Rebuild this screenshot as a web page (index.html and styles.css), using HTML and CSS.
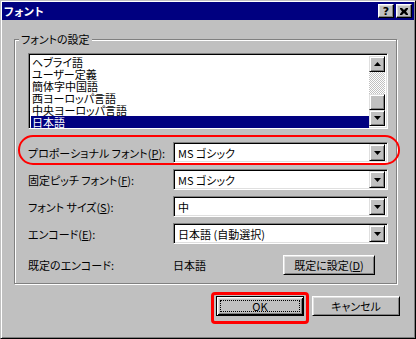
FILE: index.html
```html
<!DOCTYPE html>
<html lang="ja">
<head>
    <meta charset="UTF-8">
    <title>フォント</title>
    <link rel="stylesheet" href="styles.css">
</head>
<body>
    <div class="window">
        <div class="titlebar">
            <span class="title">フォント</span>
            <div class="caption-buttons">
                <span class="caption-btn help">?</span>
                <span class="caption-btn close">
                    <svg width="8" height="7" viewBox="0 0 8 7"><path d="M0 0h2l2 2 2-2h2v1l-2 2.5 2 2.5v1h-2l-2-2-2 2h-2v-1l2-2.5-2-2.5z" fill="#000"/></svg>
                </span>
            </div>
        </div>

        <div class="content">
            <fieldset class="group">
                <legend>フォントの設定</legend>

                <!-- script list -->
                <div class="listbox">
                    <ul class="items">
                        <li>ヘブライ語</li>
                        <li>ユーザー定義</li>
                        <li>簡体字中国語</li>
                        <li>西ヨーロッパ言語</li>
                        <li>中央ヨーロッパ言語</li>
                        <li class="selected">日本語</li>
                    </ul>
                    <div class="vscroll">
                        <span class="sb-btn"><svg width="7" height="4" viewBox="0 0 7 4"><path d="M3.5 0L7 4H0z" fill="#000"/></svg></span>
                        <span class="sb-track"></span>
                        <span class="sb-btn thumb"></span>
                        <span class="sb-btn"><svg width="7" height="4" viewBox="0 0 7 4"><path d="M0 0h7L3.5 4z" fill="#000"/></svg></span>
                    </div>
                </div>

                <div class="field-row marked">
                    <label>プロポーショナル フォント(<u>P</u>):</label>
                    <div class="combo"><span class="combo-text">MS ゴシック</span><span class="combo-btn"><svg width="7" height="4" viewBox="0 0 7 4"><path d="M0 0h7L3.5 4z" fill="#000"/></svg></span></div>
                </div>
                <div class="field-row">
                    <label>固定ピッチ フォント(<u>F</u>):</label>
                    <div class="combo"><span class="combo-text">MS ゴシック</span><span class="combo-btn"><svg width="7" height="4" viewBox="0 0 7 4"><path d="M0 0h7L3.5 4z" fill="#000"/></svg></span></div>
                </div>
                <div class="field-row">
                    <label>フォント サイズ(<u>S</u>):</label>
                    <div class="combo"><span class="combo-text">中</span><span class="combo-btn"><svg width="7" height="4" viewBox="0 0 7 4"><path d="M0 0h7L3.5 4z" fill="#000"/></svg></span></div>
                </div>
                <div class="field-row">
                    <label>エンコード(<u>E</u>):</label>
                    <div class="combo"><span class="combo-text">日本語 (自動選択)</span><span class="combo-btn"><svg width="7" height="4" viewBox="0 0 7 4"><path d="M0 0h7L3.5 4z" fill="#000"/></svg></span></div>
                </div>

                <div class="default-row">
                    <span class="default-label">既定のエンコード:</span>
                    <span class="default-value">日本語</span>
                    <span class="btn set-default">既定に設定(<u>D</u>)</span>
                </div>
            </fieldset>

            <div class="dialog-buttons">
                <span class="btn default marked-btn"><span class="focus">OK</span></span>
                <span class="btn">キャンセル</span>
            </div>
        </div>
    </div>
</body>
</html>
```

FILE: styles.css
```css
body {
    margin: 0;
    padding: 0;
    background: #c0c0c0;
    font-family: "Noto Sans CJK JP", "Noto Sans", sans-serif;
    font-size: 11px;
    line-height: 12px;
    color: #000;
    font-feature-settings: "palt";
}
.window {
    box-sizing: border-box;
    width: 416px;
    height: 339px;
    padding: 1px;
    background: #c0c0c0;
    border: 1px solid;
    border-color: #c0c0c0 #000 #000 #c0c0c0;
    box-shadow: inset 1px 1px #fff, inset -1px -1px #808080;
    display: flex;
    flex-direction: column;
}
.titlebar {
    height: 18px;
    background: #000080;
    display: flex;
    align-items: center;
    justify-content: space-between;
    padding: 0 2px 0 2px;
}
.title {
    color: #fff;
    font-weight: bold;
    font-size: 11px;
    letter-spacing: 0.5px;
}
.caption-buttons {
    display: flex;
    gap: 2px;
}
.caption-btn {
    box-sizing: border-box;
    width: 16px;
    height: 14px;
    background: #c0c0c0;
    border: 1px solid;
    border-color: #fff #000 #000 #fff;
    box-shadow: inset -1px -1px #808080, inset 1px 1px #dfdfdf;
    display: flex;
    align-items: center;
    justify-content: center;
}
.caption-btn.help {
    font-family: "DejaVu Sans", sans-serif;
    font-weight: bold;
    font-size: 11px;
    line-height: 11px;
}
.content {
    flex: 1;
    padding: 13px 0 0 12px;
}
u {
    text-decoration-thickness: 1px;
    text-underline-offset: 1px;
}

/* group box */
.group {
    box-sizing: border-box;
    width: 383px;
    height: 251px;
    margin: 0;
    padding: 8px 13px 0 13px;
    border: 1px solid #808080;
    box-shadow: inset 1px 1px #fff, 1px 1px #fff;
    min-width: 0;
}
.group legend {
    padding: 0 2px;
    margin-left: -9px;
    background: #c0c0c0;
    line-height: 12px;
}

/* listbox */
.listbox {
    box-sizing: border-box;
    width: 360px;
    height: 76px;
    display: flex;
    background: #fff;
    border: 1px solid;
    border-color: #808080 #fff #fff #808080;
    box-shadow: inset 1px 1px #000, inset -1px -1px #dfdfdf;
    padding: 2px;
}
.items {
    flex: 1;
    list-style: none;
    margin: 0;
    padding: 0;
}
.items li {
    height: 12px;
    line-height: 12px;
    padding-left: 1px;
    white-space: nowrap;
}
.items li.selected {
    background: #000080;
    color: #fff;
}
.vscroll {
    width: 16px;
    display: flex;
    flex-direction: column;
}
.sb-btn {
    box-sizing: border-box;
    width: 16px;
    height: 16px;
    background: #c0c0c0;
    border: 1px solid;
    border-color: #dfdfdf #000 #000 #dfdfdf;
    box-shadow: inset 1px 1px #fff, inset -1px -1px #808080;
    display: flex;
    align-items: center;
    justify-content: center;
}
.sb-track {
    flex: 1;
    background: repeating-conic-gradient(#c0c0c0 0 25%, #fff 0 50%) 0 0 / 2px 2px;
}

/* label + combo rows */
.field-row {
    display: flex;
    align-items: center;
    justify-content: space-between;
    width: 360px;
    height: 21px;
    margin-top: 6px;
    position: relative;
}
.field-row.marked {
    margin-top: 13px;
}
.field-row.marked::before {
    content: "";
    position: absolute;
    left: -10px;
    right: -12px;
    top: -7px;
    bottom: -2px;
    border: 2px solid #f00;
    border-radius: 15px;
}
.field-row label {
    white-space: nowrap;
}
.combo {
    box-sizing: border-box;
    width: 215px;
    height: 21px;
    display: flex;
    align-items: center;
    background: #fff;
    border: 1px solid;
    border-color: #808080 #fff #fff #808080;
    box-shadow: inset 1px 1px #000, inset -1px -1px #dfdfdf;
    padding: 2px;
}
.combo-text {
    flex: 1;
    padding-left: 2px;
    white-space: nowrap;
}
.combo-btn {
    box-sizing: border-box;
    width: 16px;
    height: 17px;
    background: #c0c0c0;
    border: 1px solid;
    border-color: #dfdfdf #000 #000 #dfdfdf;
    box-shadow: inset 1px 1px #fff, inset -1px -1px #808080;
    display: flex;
    align-items: center;
    justify-content: center;
}

/* default encoding row */
.default-row {
    display: flex;
    align-items: center;
    width: 347px;
    height: 20px;
    margin-top: 11px;
}
.default-label {
    width: 145px;
}
.default-value {
    flex: 1;
}

/* push buttons */
.btn {
    box-sizing: border-box;
    height: 20px;
    display: inline-flex;
    align-items: center;
    justify-content: center;
    background: #c0c0c0;
    border: 1px solid;
    border-color: #fff #000 #000 #fff;
    box-shadow: inset 1px 1px #dfdfdf, inset -1px -1px #808080;
    white-space: nowrap;
}
.set-default {
    width: 92px;
}
.dialog-buttons {
    display: flex;
    gap: 8px;
    margin-top: 12px;
    padding-left: 202px;
}
.dialog-buttons .btn {
    width: 88px;
    height: 20px;
}
.btn.default {
    border: 1px solid #000;
    box-shadow: inset 1px 1px #fff, inset -1px -1px #000, inset 2px 2px #dfdfdf, inset -2px -2px #808080;
    padding: 3px;
    position: relative;
}
.btn.default .focus {
    flex: 1;
    align-self: stretch;
    display: flex;
    align-items: center;
    justify-content: center;
    border: 1px dotted #000;
}
.marked-btn::before {
    content: "";
    position: absolute;
    left: -6px;
    right: -6px;
    top: -5px;
    bottom: -9px;
    border: 3px solid #f00;
    border-radius: 4px;
}
```
